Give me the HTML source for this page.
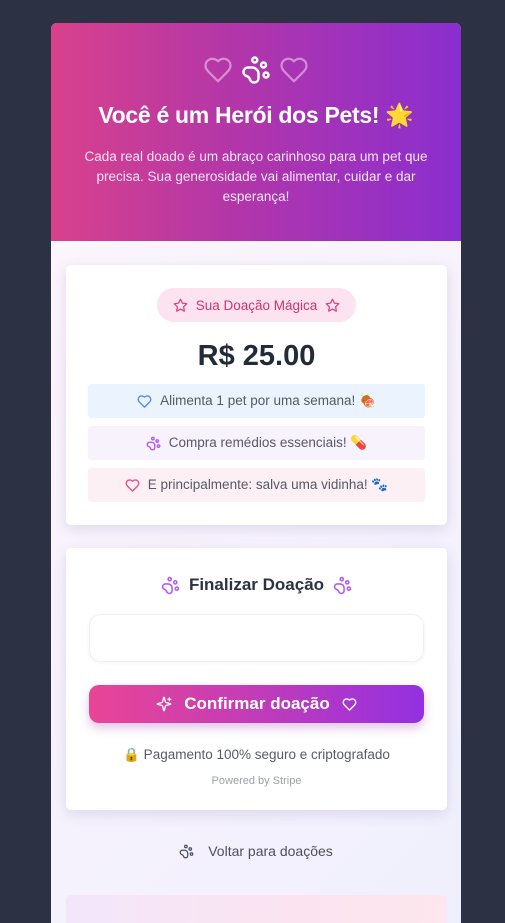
<!DOCTYPE html>
<html><head><meta charset="utf-8"><style>
*{box-sizing:border-box;margin:0;padding:0}
body{width:505px;height:912px;background:#2c3244;font-family:"Liberation Sans",sans-serif;overflow:hidden;position:relative}
.wrap{position:absolute;left:51px;top:23px;width:410px;height:900px;border-radius:6px 6px 0 0;overflow:hidden;background:linear-gradient(135deg,#fdf6fb,#f6f2fd 60%,#eff0fd)}
.hdr{height:218px;background:linear-gradient(90deg,#d9418c,#b236a9 45%,#8a2ed0);text-align:center;color:#fff;padding-top:32px}
.icons{display:flex;justify-content:center;gap:8px;height:30px}
h1{font-size:23px;font-weight:bold;margin-top:17px;letter-spacing:-0.3px}
.hdr p{font-size:13.5px;line-height:20px;color:#f6e4f4;margin:18px 18px 0}
.card{position:absolute;left:15px;width:381px;background:#fff;border-radius:5px;box-shadow:0 4px 14px rgba(90,60,130,.15);text-align:center}
.pill{display:inline-flex;align-items:center;gap:8px;margin-top:23px;height:34px;padding:0 16px;border-radius:17px;background:#fce3ef;color:#d3336f;font-size:13.5px}
.amt{font-size:29px;font-weight:bold;color:#222b3a;margin-top:18px;height:32px;line-height:32px}
.row{margin:12px 22px 0;height:34px;border-radius:3px;display:flex;align-items:center;justify-content:center;gap:8px;font-size:13.5px;color:#545a68}
.row+.row{margin-top:8px}
.h2{font-size:17px;font-weight:bold;color:#2c3240;display:flex;justify-content:center;align-items:center;gap:9px;margin-top:27px}
.inp{margin:19px 23px 0;height:48px;border-radius:12px;border:1px solid #f0f0f3;box-shadow:0 1px 4px rgba(0,0,0,.05)}
.btn{margin:23px 23px 0;height:38px;border-radius:10px;background:linear-gradient(90deg,#ea4595,#b93ac0 60%,#9330e2);color:#fff;font-weight:bold;font-size:17px;display:flex;align-items:center;justify-content:center;gap:12px;box-shadow:0 5px 10px rgba(160,60,180,.3)}
.sec{font-size:13.5px;color:#555b68;margin-top:24px;display:flex;justify-content:center;align-items:center;gap:6px}
.pw{font-size:11px;color:#9aa0aa;margin-top:12px}
.back{position:absolute;top:820px;left:0;width:410px;display:flex;justify-content:center;gap:14px;align-items:center;font-size:14px;color:#4a5060}
.bot{position:absolute;left:15px;top:872px;width:381px;height:40px;border-radius:5px;background:linear-gradient(90deg,#f3e6fb,#fbe4f0 60%,#fde6ee)}
</style></head><body>
<div class="wrap">
<div class="hdr">
<div class="icons">
<svg width="30" height="30" viewBox="0 0 24 24" fill="none" stroke="rgba(255,255,255,.45)" stroke-width="1.8" stroke-linecap="round" stroke-linejoin="round"><path d="M19 14c1.49-1.46 3-3.21 3-5.5A5.5 5.5 0 0 0 16.5 3c-1.76 0-3 .5-4.5 2-1.5-1.5-2.740-2-4.5-2A5.5 5.5 0 0 0 2 8.5c0 2.3 1.5 4.05 3 5.5l7 7Z"/></svg>
<svg width="30" height="30" viewBox="0 0 24 24" fill="none" stroke="#fff" stroke-width="2" stroke-linecap="round" stroke-linejoin="round"><circle cx="11" cy="4" r="2"/><circle cx="18" cy="8" r="2"/><circle cx="20" cy="16" r="2"/><path d="M9 10a5 5 0 0 1 5 5v3.5a3.5 3.5 0 0 1-6.84 1.045Q6.52 17.48 4.46 16.84A3.5 3.5 0 0 1 5.5 10Z"/></svg>
<svg width="30" height="30" viewBox="0 0 24 24" fill="none" stroke="rgba(255,255,255,.45)" stroke-width="1.8" stroke-linecap="round" stroke-linejoin="round"><path d="M19 14c1.49-1.46 3-3.21 3-5.5A5.5 5.5 0 0 0 16.5 3c-1.76 0-3 .5-4.5 2-1.5-1.5-2.74-2-4.5-2A5.5 5.5 0 0 0 2 8.5c0 2.3 1.5 4.05 3 5.5l7 7Z"/></svg>
</div>
<h1>Você é um Herói dos Pets! 🌟</h1>
<p>Cada real doado é um abraço carinhoso para um pet que precisa. Sua generosidade vai alimentar, cuidar e dar esperança!</p>
</div>
<div class="card" style="top:242px;height:260px">
<div class="pill"><svg width="15" height="15" viewBox="0 0 24 24" fill="none" stroke="#e0407d" stroke-width="2" stroke-linejoin="round"><path d="M12 2l3.09 6.26L22 9.27l-5 4.87 1.18 6.88L12 17.77l-6.18 3.25L7 14.14 2 9.27l6.91-1.01Z"/></svg>Sua Doação Mágica<svg width="15" height="15" viewBox="0 0 24 24" fill="none" stroke="#e0407d" stroke-width="2" stroke-linejoin="round"><path d="M12 2l3.09 6.26L22 9.27l-5 4.87 1.18 6.88L12 17.77l-6.18 3.25L7 14.14 2 9.27l6.91-1.01Z"/></svg></div>
<div class="amt">R$ 25.00</div>
<div class="row" style="background:#ebf4fe"><svg width="15" height="15" viewBox="0 0 24 24" fill="none" stroke="#4f8ef5" stroke-width="2.2" stroke-linejoin="round"><path d="M19 14c1.49-1.46 3-3.21 3-5.5A5.5 5.5 0 0 0 16.5 3c-1.76 0-3 .5-4.5 2-1.5-1.5-2.74-2-4.5-2A5.5 5.5 0 0 0 2 8.5c0 2.3 1.5 4.05 3 5.5l7 7Z"/></svg>Alimenta 1 pet por uma semana! 🍖</div>
<div class="row" style="background:#f8f2fd"><svg width="15" height="15" viewBox="0 0 24 24" fill="none" stroke="#b45cf0" stroke-width="2.2"><circle cx="11" cy="4" r="2"/><circle cx="18" cy="8" r="2"/><circle cx="20" cy="16" r="2"/><path d="M9 10a5 5 0 0 1 5 5v3.5a3.5 3.5 0 0 1-6.84 1.045Q6.52 17.48 4.46 16.84A3.5 3.5 0 0 1 5.5 10Z"/></svg>Compra remédios essenciais! 💊</div>
<div class="row" style="background:#fdf0f5"><svg width="15" height="15" viewBox="0 0 24 24" fill="none" stroke="#ec4f8c" stroke-width="2.2" stroke-linejoin="round"><path d="M19 14c1.49-1.46 3-3.21 3-5.5A5.5 5.5 0 0 0 16.5 3c-1.76 0-3 .5-4.5 2-1.5-1.5-2.74-2-4.5-2A5.5 5.5 0 0 0 2 8.5c0 2.3 1.5 4.05 3 5.5l7 7Z"/></svg>E principalmente: salva uma vidinha! 🐾</div>
</div>
<div class="card" style="top:525px;height:262px">
<div class="h2"><svg width="19" height="19" viewBox="0 0 24 24" fill="none" stroke="#b45cf0" stroke-width="2"><circle cx="11" cy="4" r="2"/><circle cx="18" cy="8" r="2"/><circle cx="20" cy="16" r="2"/><path d="M9 10a5 5 0 0 1 5 5v3.5a3.5 3.5 0 0 1-6.84 1.045Q6.52 17.48 4.46 16.84A3.5 3.5 0 0 1 5.5 10Z"/></svg>Finalizar Doação<svg width="19" height="19" viewBox="0 0 24 24" fill="none" stroke="#b45cf0" stroke-width="2"><circle cx="11" cy="4" r="2"/><circle cx="18" cy="8" r="2"/><circle cx="20" cy="16" r="2"/><path d="M9 10a5 5 0 0 1 5 5v3.5a3.5 3.5 0 0 1-6.84 1.045Q6.52 17.48 4.46 16.84A3.5 3.5 0 0 1 5.5 10Z"/></svg></div>
<div class="inp"></div>
<div class="btn"><svg width="16" height="16" viewBox="0 0 24 24" fill="none" stroke="#fff" stroke-width="2" stroke-linejoin="round" stroke-linecap="round"><path d="M9.94 15.5A2 2 0 0 0 8.5 14.06l-6.13-1.58a.5.5 0 0 1 0-.96L8.5 9.94A2 2 0 0 0 9.94 8.5l1.58-6.13a.5.5 0 0 1 .96 0L14.06 8.5A2 2 0 0 0 15.5 9.94l6.13 1.58a.5.5 0 0 1 0 .96L15.5 14.060a2 2 0 0 0-1.44 1.44l-1.58 6.13a.5.5 0 0 1-.96 0z"/><path d="M20 3v4M22 5h-4"/></svg>Confirmar doação<svg width="15" height="15" viewBox="0 0 24 24" fill="none" stroke="#fff" stroke-width="2.2" stroke-linejoin="round"><path d="M19 14c1.49-1.46 3-3.21 3-5.5A5.5 5.5 0 0 0 16.5 3c-1.76 0-3 .5-4.5 2-1.5-1.5-2.74-2-4.5-2A5.5 5.5 0 0 0 2 8.5c0 2.3 1.5 4.05 3 5.5l7 7Z"/></svg></div>
<div class="sec">🔒 Pagamento 100% seguro e criptografado</div>
<div class="pw">Powered by Stripe</div>
</div>
<div class="back"><svg width="15" height="15" viewBox="0 0 24 24" fill="none" stroke="#4a5060" stroke-width="2"><circle cx="11" cy="4" r="2"/><circle cx="18" cy="8" r="2"/><circle cx="20" cy="16" r="2"/><path d="M9 10a5 5 0 0 1 5 5v3.5a3.5 3.5 0 0 1-6.84 1.045Q6.52 17.48 4.46 16.84A3.5 3.5 0 0 1 5.5 10Z"/></svg>Voltar para doações</div>
<div class="bot"></div>
</div>
</body></html>
